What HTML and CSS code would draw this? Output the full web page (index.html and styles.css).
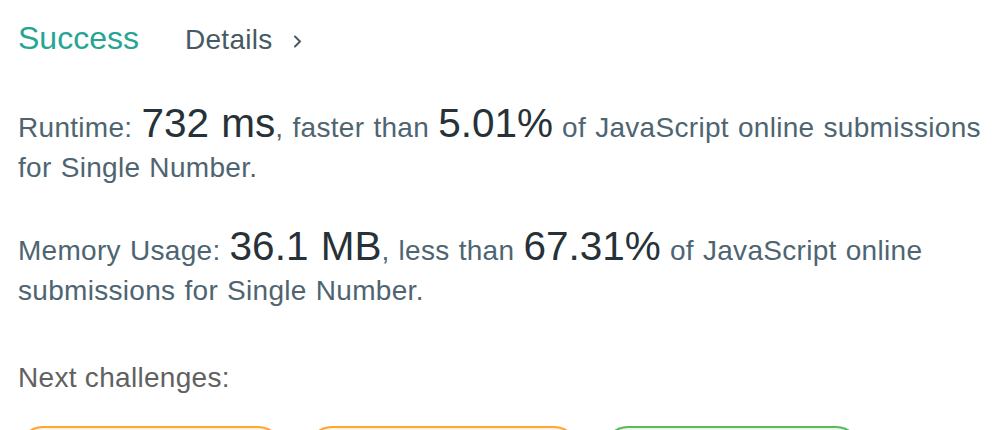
FILE: index.html
```html
<!DOCTYPE html>
<html lang="en">
<head>
<meta charset="utf-8">
<title>Submission result</title>
<link rel="stylesheet" href="styles.css">
</head>
<body>
<main class="result">
  <header class="result-head">
    <span class="status">Success</span>
    <a class="details" href="#">Details
      <svg class="chev" width="9" height="13" viewBox="0 0 9 13" aria-hidden="true"><path d="M2 1.5 L7 6.5 L2 11.5" fill="none" stroke="currentColor" stroke-width="2" stroke-linecap="round" stroke-linejoin="round"/></svg>
    </a>
  </header>
  <p class="stat">Runtime: <span class="big">732 ms</span>, faster than <span class="big">5.01%</span> of JavaScript online submissions for Single Number.</p>
  <p class="stat">Memory Usage: <span class="big">36.1 MB</span>, less than <span class="big">67.31%</span> of JavaScript online submissions for Single Number.</p>
  <p class="next-title">Next challenges:</p>
  <div class="challenges">
    <a class="pill medium" href="#">Single Number II</a>
    <a class="pill medium" href="#">Single Number III</a>
    <a class="pill easy" href="#">Missing Number</a>
  </div>
</main>
</body>
</html>
```
FILE: styles.css
```css
html, body {
  margin: 0;
  padding: 0;
  background: #ffffff;
}

.result {
  font-family: "Liberation Sans", Arial, sans-serif;
  color: #4e6571;
  padding: 18px 8px 0 18px;
}

.result-head {
  display: flex;
  align-items: baseline;
  line-height: 40px;
}

.status {
  font-size: 32px;
  color: #27a594;
}

.details {
  margin-left: 46px;
  font-size: 28px;
  letter-spacing: 0.3px;
  color: #455a64;
  text-decoration: none;
  display: inline-flex;
  align-items: center;
}

.chev {
  margin-left: 20px;
  color: #455a64;
  position: relative;
  top: 1px;
}

.stat {
  font-size: 28px;
  line-height: 40px;
  letter-spacing: 0.3px;
  word-spacing: 1px;
  margin: 43px 0 0 0;
}

.stat + .stat {
  margin-top: 38px;
}

.big {
  font-size: 40.5px;
  letter-spacing: 0;
  color: #263238;
}

.next-title {
  font-size: 28px;
  line-height: 40px;
  letter-spacing: 0.3px;
  color: #616161;
  margin: 47px 0 0 0;
}

.challenges {
  display: flex;
  gap: 24px;
  margin-top: 28px;
}

.pill {
  font-size: 28px;
  line-height: 40px;
  padding: 12px 26px;
  border: 2px solid;
  border-radius: 25px;
  text-decoration: none;
}

.pill.medium {
  border-color: #ffa630;
  background: #fff4e4;
  color: #ef8f00;
}

.pill.easy {
  border-color: #5cb85c;
  background: #ebf6eb;
  color: #43a047;
}
```
